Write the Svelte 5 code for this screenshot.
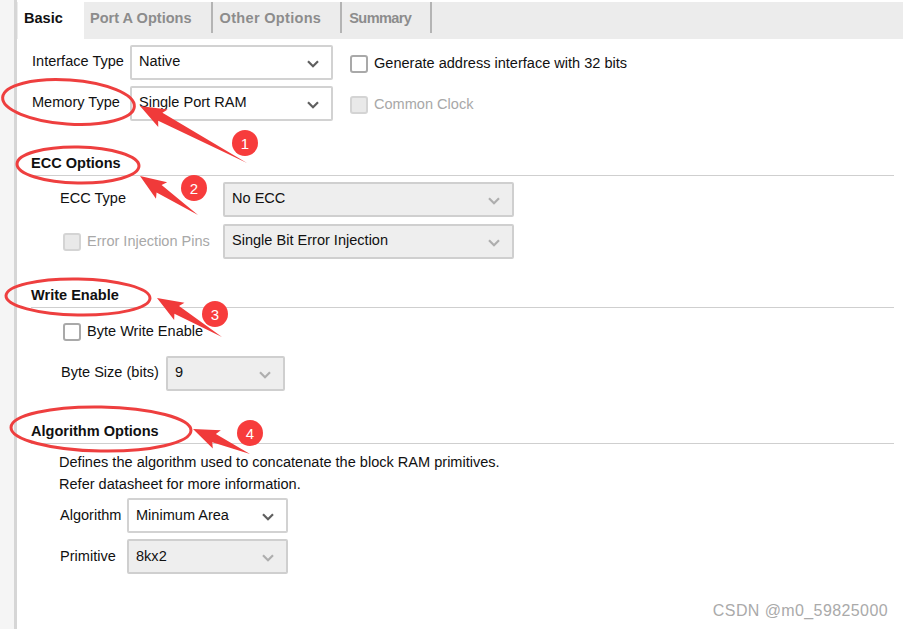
<script>
  const tabs = ['Port A Options', 'Other Options', 'Summary'];

  // red arrows drawn on top of the screenshot: tip and tail points
  const arrows = [
    { tip: [140, 106], tail: [247, 163] },
    { tip: [140, 176], tail: [198, 215] },
    { tip: [157, 298], tail: [222, 337] },
    { tip: [193, 429], tail: [250, 454] }
  ];
  const ellipses = [
    { cx: 68.5, cy: 102, rx: 66, ry: 22, rot: 4 },
    { cx: 78, cy: 165, rx: 61, ry: 18, rot: 1 },
    { cx: 78, cy: 297, rx: 72, ry: 18, rot: 1 },
    { cx: 101, cy: 429, rx: 90, ry: 22, rot: 1 }
  ];
  const badges = [
    { x: 245, y: 143, n: 1 },
    { x: 194, y: 188, n: 2 },
    { x: 215, y: 314, n: 3 },
    { x: 250, y: 433, n: 4 }
  ];

  function arrowPoints({ tip, tail }) {
    const dx = tail[0] - tip[0];
    const dy = tail[1] - tip[1];
    const len = Math.hypot(dx, dy);
    const ux = dx / len;
    const uy = dy / len;
    const at = (along, side) => `${tip[0] + ux * along - uy * side},${tip[1] + uy * along + ux * side}`;
    return [at(0, 0), at(26, 10), at(23, 4.5), tail.join(','), at(23, -4.5), at(26, -10)].join(' ');
  }
</script>

{#snippet chevron()}
  <svg class="chev" width="12" height="8" viewBox="0 0 12 8"><path d="M1 1.2 6 6.2l5-5" fill="none" stroke="currentColor" stroke-width="2.2" /></svg>
{/snippet}

{#snippet select(value, width, disabled = false)}
  <div class="select" class:disabled style:width="{width}px">
    <span>{value}</span>
    {@render chevron()}
  </div>
{/snippet}

<div class="page">
  <div class="panel">
    <div class="tabbar">
      <div class="tab active">Basic</div>
      {#each tabs as tab}
        <div class="tab">{tab}</div>
      {/each}
    </div>

    <div class="top-rows">
      <div class="row">
        <span class="lbl first">Interface Type</span>
        {@render select('Native', 203)}
        <label class="check gen"><i class="box"></i>Generate address interface with 32 bits</label>
      </div>
      <div class="row">
        <span class="lbl first">Memory Type</span>
        {@render select('Single Port RAM', 203)}
        <label class="check gen off"><i class="box"></i>Common Clock</label>
      </div>
    </div>

    <section class="ecc">
      <h3>ECC Options</h3>
      <div class="row tall">
        <span class="lbl ecc-lbl">ECC Type</span>
        {@render select('No ECC', 291, true)}
      </div>
      <div class="row tall">
        <label class="check err off"><i class="box"></i>Error Injection Pins</label>
        {@render select('Single Bit Error Injection', 291, true)}
      </div>
    </section>

    <section class="we">
      <h3>Write Enable</h3>
      <label class="check byte"><i class="box"></i>Byte Write Enable</label>
      <div class="row">
        <span class="lbl size">Byte Size (bits)</span>
        {@render select('9', 119, true)}
      </div>
    </section>

    <section class="algo">
      <h3>Algorithm Options</h3>
      <p>Defines the algorithm used to concatenate the block RAM primitives.</p>
      <p>Refer datasheet for more information.</p>
      <div class="row algo-row">
        <span class="lbl alg">Algorithm</span>
        {@render select('Minimum Area', 161)}
      </div>
      <div class="row algo-row second">
        <span class="lbl alg">Primitive</span>
        {@render select('8kx2', 161, true)}
      </div>
    </section>
  </div>

  <svg class="marks" width="903" height="629" viewBox="0 0 903 629">
    {#each ellipses as e}
      <ellipse cx={e.cx} cy={e.cy} rx={e.rx} ry={e.ry} transform="rotate({e.rot} {e.cx} {e.cy})" fill="none" stroke="#ee3f3f" stroke-width="3" />
    {/each}
    {#each arrows as a}
      <polygon points={arrowPoints(a)} fill="#f03a3a" />
    {/each}
    {#each badges as b}
      <circle cx={b.x} cy={b.y} r="13" fill="#f73c3c" />
      <text x={b.x} y={b.y + 5.5} text-anchor="middle" font-size="15" fill="#fff" font-family="Liberation Sans, sans-serif">{b.n}</text>
    {/each}
  </svg>

  <div class="watermark">CSDN @m0_59825000</div>
</div>

<style>
  :global(body) {
    margin: 0;
    background: #fff;
  }

  .page {
    position: relative;
    display: flex;
    width: 903px;
    height: 629px;
    overflow: hidden;
    font-family: "Liberation Sans", Arial, sans-serif;
    font-size: 14.55px;
    color: #111;
    background: #f5f5f5;
  }

  .panel {
    flex: 1;
    margin-left: 14px;
    border-left: 3px solid #d6d6d6;
    background: #fff;
    padding-top: 2px;
  }

  .tabbar {
    display: flex;
    height: 37px;
    background: #ececec;
    padding-left: 1px;
  }

  .tab {
    font-weight: bold;
    color: #8c8c8c;
    height: 31px;
    line-height: 33px;
    padding: 0 19px 0 5px;
    border-right: 2px solid #b4b4b4;
    margin-left: 1px;
  }

  .tab:nth-child(3) {
    letter-spacing: 0.3px;
    padding-left: 6px;
  }

  .tab:nth-child(4) {
    letter-spacing: -0.6px;
    padding-left: 6px;
  }

  .tab.active {
    width: 66px;
    height: 37px;
    box-sizing: border-box;
    padding: 0 0 0 6px;
    margin-left: 0;
    background: #fff;
    border: 0;
    color: #111;
    line-height: 33px;
  }

  .top-rows {
    padding: 6px 0 0 15px;
    display: flex;
    flex-direction: column;
    gap: 6px;
  }

  .row {
    display: flex;
    align-items: center;
  }

  .lbl {
    white-space: nowrap;
    padding-bottom: 3px;
  }

  .first {
    width: 98px;
  }

  .select {
    box-sizing: border-box;
    height: 35px;
    display: flex;
    align-items: center;
    justify-content: space-between;
    padding: 0 12px 3px 7px;
    border: 2px solid #d2d2d2;
    border-radius: 2px;
    background: #fff;
    flex: none;
  }

  .select.disabled {
    background: #eee;
    border-color: #cfcfcf;
  }

  .chev {
    color: #5f5f5f;
    margin-top: 5px;
  }

  .disabled .chev {
    color: #aeaeae;
  }

  .check {
    display: flex;
    align-items: center;
    white-space: nowrap;
  }

  .box {
    box-sizing: border-box;
    width: 18px;
    height: 18px;
    margin-top: 2px;
    margin-right: 6px;
    border: 2px solid #a9a9a9;
    border-radius: 3px;
    background: #fff;
  }

  .off {
    color: #a8a8a8;
  }

  .off .box {
    border-color: #d4d4d4;
    background: #e9e9e9;
  }

  .gen {
    margin-left: 17px;
  }

  h3 {
    margin: 0;
    margin-left: 14px;
    height: 26px;
    line-height: 28px;
    font-size: 14.55px;
    color: #111;
    border-bottom: 1px solid #cfcfcf;
    margin-right: 9px;
  }

  .ecc {
    margin-top: 28px;
  }

  .ecc .row {
    padding-left: 43px;
    margin-top: 7px;
  }

  .ecc h3 + .row {
    margin-top: 6px;
  }

  .ecc-lbl {
    width: 163px;
  }

  .err {
    width: 163px;
    margin-left: 3px;
    margin-right: -3px;
    padding-bottom: 2px;
  }

  .we {
    margin-top: 22px;
  }

  .byte {
    margin: 13px 0 0 46px;
  }

  .size {
    width: 105px;
  }

  .we .row {
    padding-left: 44px;
    margin-top: 15px;
  }

  .algo {
    margin-top: 26px;
  }

  .algo p {
    margin: 0 0 0 42px;
    height: 22px;
    line-height: 22px;
  }

  .algo h3 + p {
    margin-top: 7px;
  }

  .algo-row {
    padding-left: 43px;
    margin-top: 3px;
  }

  .algo-row.second {
    margin-top: 6px;
  }

  .algo-row .lbl {
    padding-bottom: 1px;
  }

  .algo-row .select {
    padding-bottom: 2px;
  }

  .alg {
    width: 67px;
  }

  .marks {
    position: absolute;
    inset: 0;
    pointer-events: none;
  }

  .watermark {
    position: absolute;
    right: 15px;
    top: 602px;
    font-size: 16px;
    color: #aaa;
    letter-spacing: 0.4px;
  }
</style>
